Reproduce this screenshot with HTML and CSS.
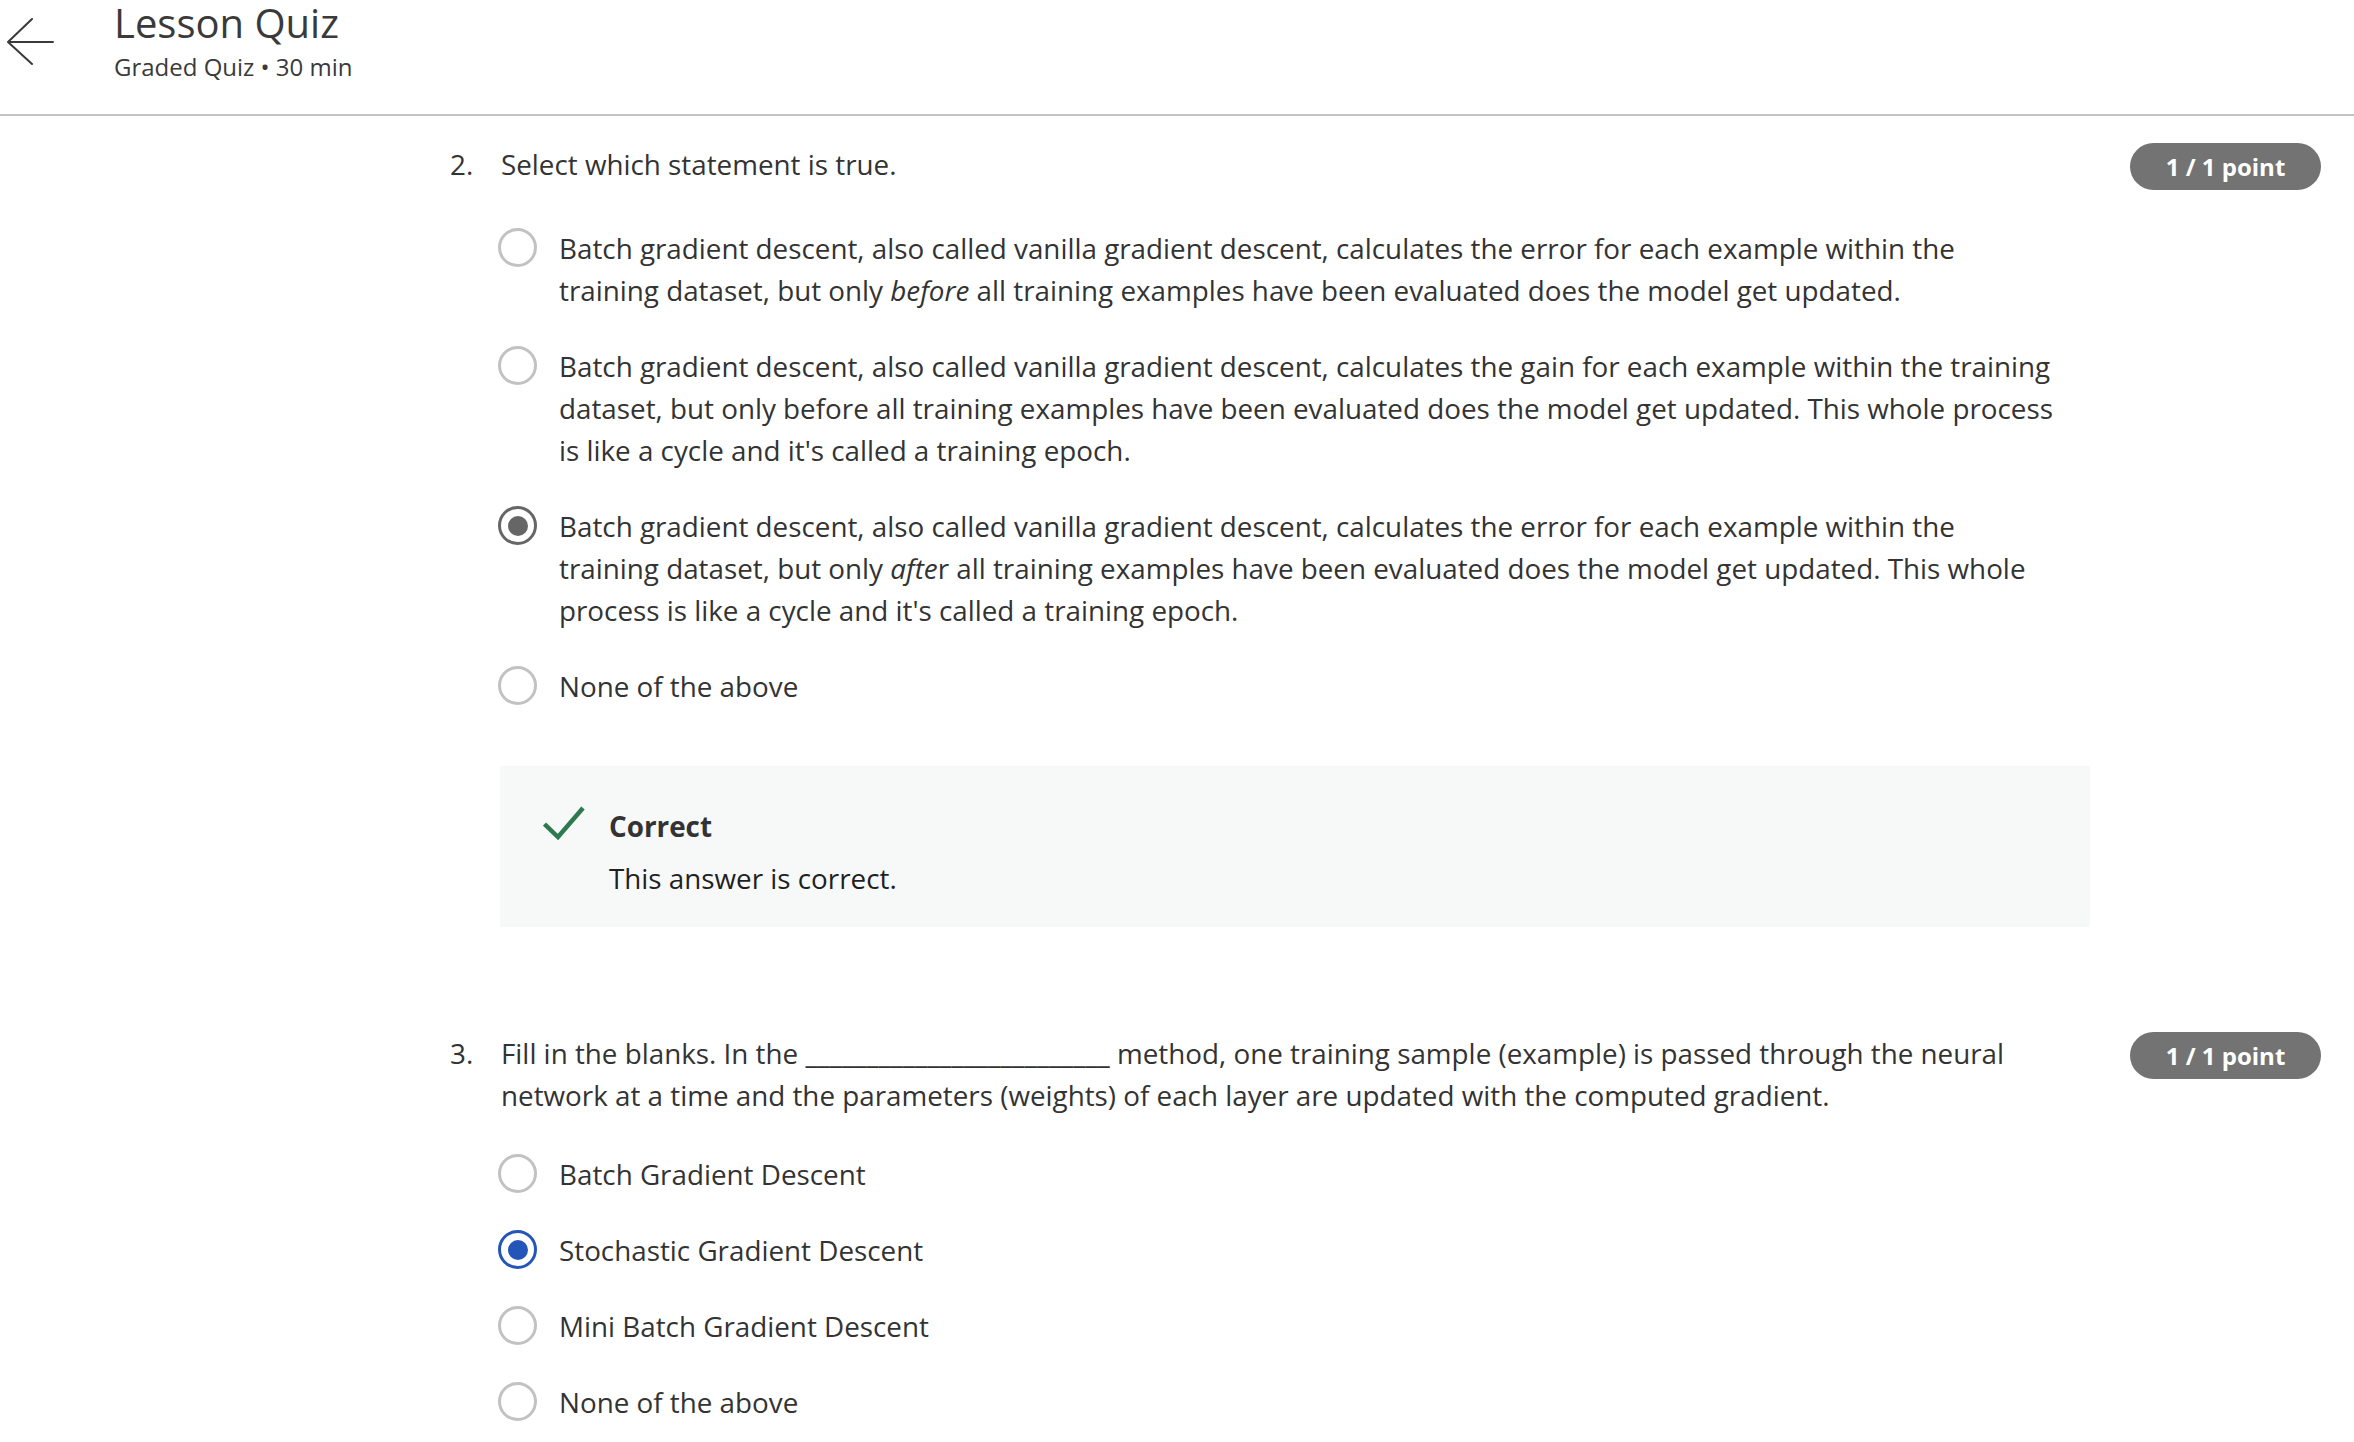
FILE: index.html
```html
<!DOCTYPE html>
<html lang="en">
<head>
<meta charset="utf-8">
<title>Lesson Quiz</title>
<link rel="stylesheet" href="styles.css">
</head>
<body>
<header class="topbar">
  <button class="back" aria-label="Back">
    <svg width="48" height="48" viewBox="0 0 48 48" fill="none" stroke="#3a3a3a" stroke-width="2" stroke-linecap="round" stroke-linejoin="round">
      <path d="M47 24 H2 M26 1 L2 24 L26 46"/>
    </svg>
  </button>
  <div class="titles">
    <h1 class="title">Lesson Quiz</h1>
    <div class="subtitle">Graded Quiz • 30 min</div>
  </div>
</header>

<main class="quiz">
  <section class="question q-first">
    <div class="qhead">
      <div class="qnum">2.</div>
      <div class="qtext">Select which statement is true.</div>
      <div class="points">1 / 1 point</div>
    </div>
    <div class="qbody">
      <ul class="options">
        <li class="option"><span class="radio"></span><span class="otext">Batch gradient descent, also called vanilla gradient descent, calculates the error for each example within the training dataset, but only <em>before</em> all training examples have been evaluated does the model get updated.</span></li>
        <li class="option"><span class="radio"></span><span class="otext">Batch gradient descent, also called vanilla gradient descent, calculates the gain for each example within the training dataset, but only before all training examples have been evaluated does the model get updated. This whole process is like a cycle and it's called a training epoch.</span></li>
        <li class="option"><span class="radio checked-gray"></span><span class="otext">Batch gradient descent, also called vanilla gradient descent, calculates the error for each example within the training dataset, but only <em>afte</em>r all training examples have been evaluated does the model get updated. This whole process is like a cycle and it's called a training epoch.</span></li>
        <li class="option"><span class="radio"></span><span class="otext">None of the above</span></li>
      </ul>
      <div class="feedback">
        <svg class="check" width="42" height="34" viewBox="0 0 42 34" fill="none" stroke="#2e7a4f" stroke-width="4.5">
          <path d="M1.5 18 L15 31 L40 2"/>
        </svg>
        <div class="fb-text">
          <div class="fb-title">Correct</div>
          <div class="fb-msg">This answer is correct.</div>
        </div>
      </div>
    </div>
  </section>

  <section class="question q-next">
    <div class="qhead">
      <div class="qnum">3.</div>
      <div class="qtext">Fill in the blanks. In the _________________________ method, one training sample (example) is passed through the neural network at a time and the parameters (weights) of each layer are updated with the computed gradient.</div>
      <div class="points">1 / 1 point</div>
    </div>
    <div class="qbody">
      <ul class="options">
        <li class="option"><span class="radio"></span><span class="otext">Batch Gradient Descent</span></li>
        <li class="option"><span class="radio checked-blue"></span><span class="otext">Stochastic Gradient Descent</span></li>
        <li class="option"><span class="radio"></span><span class="otext">Mini Batch Gradient Descent</span></li>
        <li class="option"><span class="radio"></span><span class="otext">None of the above</span></li>
      </ul>
    </div>
  </section>
</main>
</body>
</html>
```

FILE: styles.css
```css
html, body {
  margin: 0;
  padding: 0;
  background: #ffffff;
}

body {
  font-family: "Open Sans", "Noto Sans", sans-serif;
  color: #333333;
  font-size: 27.8px;
  line-height: 42px;
  overflow: hidden;
}

.topbar {
  display: flex;
  align-items: flex-start;
  height: 114px;
  border-bottom: 2px solid #c4c4c4;
}

.back {
  border: 0;
  background: none;
  padding: 0;
  margin: 18px 0 0 6px;
  width: 48px;
  height: 48px;
  flex: none;
}

.back svg {
  display: block;
}

.titles {
  margin-left: 60px;
}

.title {
  margin: 0;
  font-size: 40px;
  line-height: 42px;
  font-weight: 400;
  color: #3a3a3a;
  padding-top: 2px;
}

.subtitle {
  margin-top: 8px;
  font-size: 24px;
  line-height: 30px;
  color: #3a3a3a;
}

.quiz {
  padding: 0 33px 0 450px;
}

.question.q-first {
  margin-top: 27px;
}

.question.q-next {
  margin-top: 105px;
}

.qhead {
  display: flex;
  align-items: flex-start;
}

.qnum {
  width: 51px;
  flex: none;
}

.qtext {
  flex: 1;
}

.points {
  flex: none;
  margin-left: 40px;
  width: 191px;
  height: 47px;
  border-radius: 24px;
  background: #737373;
  color: #ffffff;
  font-weight: 700;
  font-size: 24px;
  line-height: 47px;
  text-align: center;
}

.qbody {
  margin-left: 51px;
  margin-right: 231px;
}

.options {
  list-style: none;
  margin: 37px 0 0 0;
  padding: 0 34px 0 0;
}

.option {
  display: flex;
  align-items: flex-start;
  margin-bottom: 34px;
}

.option:last-child {
  margin-bottom: 0;
}

.radio {
  flex: none;
  box-sizing: border-box;
  width: 39px;
  height: 39px;
  margin: 1px 22px 0 -3px;
  border: 3px solid #c2c2c2;
  border-radius: 50%;
  display: flex;
  align-items: center;
  justify-content: center;
}

.radio.checked-gray {
  border-color: #666666;
}

.radio.checked-gray::after {
  content: "";
  width: 20px;
  height: 20px;
  border-radius: 50%;
  background: #666666;
}

.radio.checked-blue {
  border-color: #2455b8;
}

.radio.checked-blue::after {
  content: "";
  width: 20px;
  height: 20px;
  border-radius: 50%;
  background: #2455b8;
}

.otext em {
  font-style: italic;
}

.feedback {
  margin: 59px 0 0 -1px;
  background: #f7f9f8;
  display: flex;
  align-items: flex-start;
  padding: 39px 40px 28px 43px;
}

.check {
  flex: none;
  display: block;
  margin-top: 1px;
}

.fb-text {
  margin-left: 24px;
}

.fb-title {
  font-weight: 700;
  color: #333333;
}

.fb-msg {
  margin-top: 10px;
  color: #1f1f1f;
}
```
